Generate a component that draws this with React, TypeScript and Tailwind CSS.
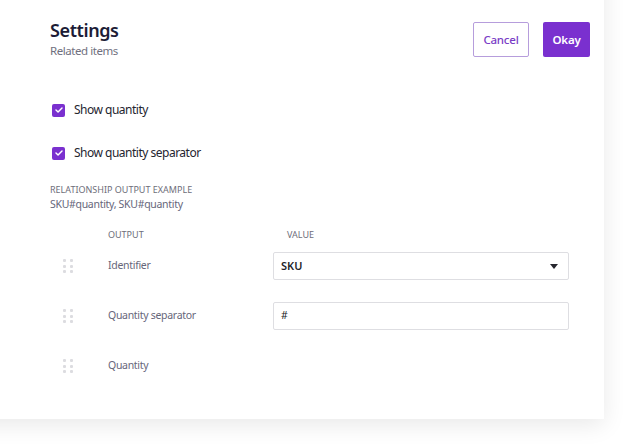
import React from 'react';

const font = { fontFamily: '"Noto Sans", "Open Sans", sans-serif' };

function Check({ label }: { label: string }) {
  return (
    <div className="flex items-center h-[20px]">
      <div className="ml-[2px] w-[13px] h-[13px] rounded-[2px] bg-[#7a30cf] flex items-center justify-center">
        <svg width="8" height="6" viewBox="0 0 9 7" fill="none">
          <path d="M1 3.6 L3.4 5.8 L8 1.2" stroke="white" strokeWidth="1.7" strokeLinecap="round" strokeLinejoin="round" />
        </svg>
      </div>
      <span className="ml-[9px] text-[12px] tracking-[-0.5px] text-[#25252f]">{label}</span>
    </div>
  );
}

function Handle() {
  return (
    <div className="ml-[13px] grid grid-cols-2 gap-x-[3.5px] gap-y-[2.5px] w-[10px]">
      {[0, 1, 2, 3, 4, 5].map((i) => (
        <span key={i} className="block w-[3px] h-[3px] rounded-[1px] bg-[#dcdce0]" />
      ))}
    </div>
  );
}

function Row({ label, children }: { label: string; children?: React.ReactNode }) {
  return (
    <div className="grid grid-cols-[58px_165px_296px] items-center h-[28px]">
      <Handle />
      <span className="text-[10.5px] tracking-[-0.3px] text-[#66667a]">{label}</span>
      <div>{children}</div>
    </div>
  );
}

export default function App() {
  return (
    <div className="w-[629px] h-[446px] overflow-hidden bg-white" style={font}>
      <div className="-mt-[40px] -ml-[40px] w-[644px] h-[459px] bg-white shadow-[0_6px_22px_rgba(0,0,0,0.09)] pt-[58px] pl-[90px] pr-[14px]">
        <div className="flex justify-between items-start">
          <div>
            <h1 className="text-[18px] leading-[24px] tracking-[-0.4px] font-semibold text-[#1c1c36]">Settings</h1>
            <p className="mt-[2px] text-[11.5px] leading-[14px] tracking-[-0.45px] text-[#70707e]">Related items</p>
          </div>
          <div className="flex gap-[14px] mt-[4px]">
            <button className="h-[35px] w-[56px] rounded-[2px] border border-[#b69ddc] text-[11.5px] tracking-[-0.2px] font-medium text-[#7a3cc6] bg-white">
              Cancel
            </button>
            <button className="h-[35px] w-[47px] rounded-[2px] bg-[#7a30cf] text-[11.5px] tracking-[-0.2px] font-semibold text-white">
              Okay
            </button>
          </div>
        </div>

        <div className="mt-[42px]">
          <Check label="Show quantity" />
        </div>
        <div className="mt-[23px]">
          <Check label="Show quantity separator" />
        </div>

        <p className="mt-[21px] text-[9px] leading-[12px] uppercase text-[#6e6e7a]">Relationship output example</p>
        <p className="mt-[1px] text-[10.5px] leading-[14px] tracking-[-0.3px] text-[#66667a]">SKU#quantity, SKU#quantity</p>

        <div className="mt-[18px] grid grid-cols-[58px_165px_296px] text-[9px] leading-[12px] uppercase text-[#6e6e7a]">
          <span />
          <span>Output</span>
          <span className="pl-[14px]">Value</span>
        </div>

        <div className="mt-[11px] flex flex-col gap-[22px]">
          <Row label="Identifier">
            <div className="h-[28px] border border-[#dedee2] rounded-[2px] flex items-center justify-between pl-[7px] pr-[10px]">
              <span className="text-[11px] font-semibold text-[#1f1f2a]">SKU</span>
              <svg width="8" height="5" viewBox="0 0 8 5">
                <path d="M0 0 H8 L4 5 Z" fill="#26262e" />
              </svg>
            </div>
          </Row>
          <Row label="Quantity separator">
            <div className="h-[28px] border border-[#dedee2] rounded-[2px] flex items-center pl-[7px]">
              <span className="text-[10.5px] text-[#1f1f2a]">#</span>
            </div>
          </Row>
          <Row label="Quantity" />
        </div>
      </div>
    </div>
  );
}
